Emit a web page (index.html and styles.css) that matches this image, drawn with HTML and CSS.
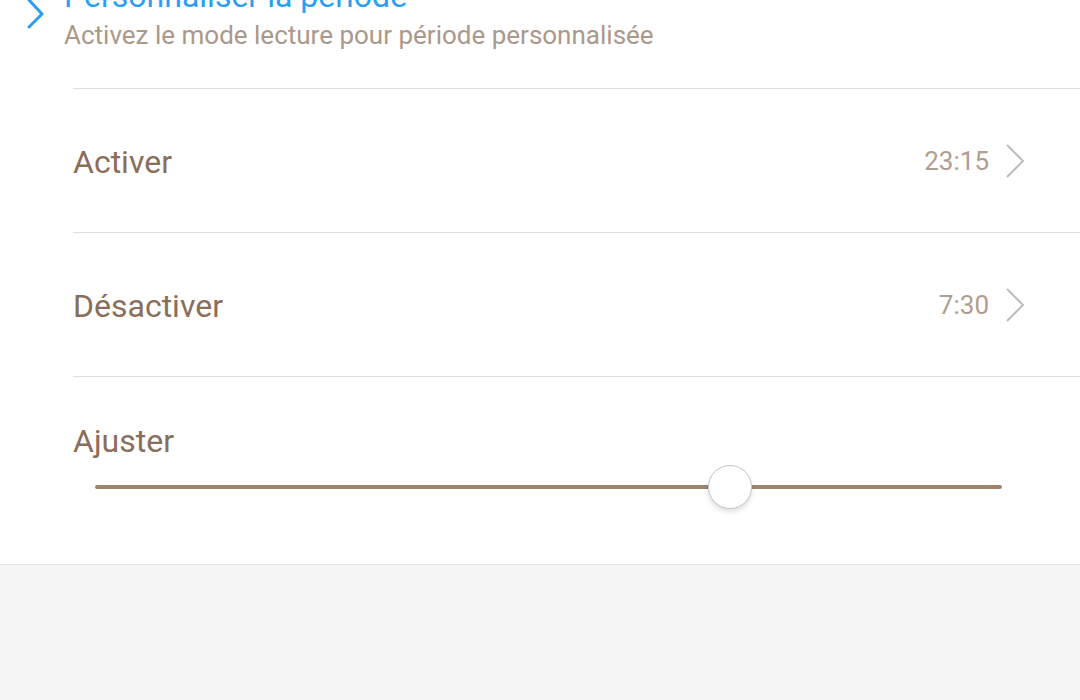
FILE: index.html
```html
<!DOCTYPE html>
<html lang="fr">
<head>
  <meta charset="UTF-8">
  <title>Mode lecture</title>
  <link rel="stylesheet" href="styles.css">
</head>
<body>

<div class="panel">
  <div class="intro">
    <svg class="intro-icon" width="20" height="40" viewBox="0 0 20 40">
      <polyline points="3,2 16,16 3,29" fill="none" stroke="#2a9ef2" stroke-width="3" stroke-linecap="round" stroke-linejoin="round"/>
    </svg>
    <div class="intro-text">
      <div class="intro-title">Personnaliser la période</div>
      <div class="intro-sub">Activez le mode lecture pour période personnalisée</div>
    </div>
  </div>

  <div class="row">
    <span class="row-label">Activer</span>
    <span class="row-value">23:15</span>
    <svg class="row-arrow" width="20" height="36" viewBox="0 0 20 36">
      <polyline points="2,2 18,18 2,34" fill="none" stroke="#bdbdbd" stroke-width="2"/>
    </svg>
  </div>

  <div class="row">
    <span class="row-label">Désactiver</span>
    <span class="row-value">7:30</span>
    <svg class="row-arrow" width="20" height="36" viewBox="0 0 20 36">
      <polyline points="2,2 18,18 2,34" fill="none" stroke="#bdbdbd" stroke-width="2"/>
    </svg>
  </div>

  <div class="adjust">
    <div class="row-label">Ajuster</div>
    <div class="slider">
      <div class="slider-track"></div>
      <div class="slider-thumb" style="left: 70%"></div>
    </div>
  </div>
</div>

</body>
</html>
```

FILE: styles.css
```css
body {
  font-family: Roboto, "Noto Sans", sans-serif;
  margin: 0;
  background-color: #f5f5f5;
}
.panel {
  background-color: #fff;
  border-bottom: 1px solid #e6e6e6;
  overflow: hidden;
}
/* header is scrolled partly out of view */
.intro {
  display: flex;
  margin-top: -23px;
  padding-left: 26px;
}
.intro-icon {
  margin-top: 21px;
  margin-right: 18px;
  flex-shrink: 0;
}
.intro-title {
  font-size: 32px;
  line-height: 38px;
  color: #2a9ef2;
}
.intro-sub {
  margin-top: 4px;
  font-size: 26px;
  line-height: 32px;
  color: #ab988b;
  padding-bottom: 37px;
}
.row {
  display: flex;
  align-items: center;
  height: 143px;
  margin-left: 73px;
  padding-right: 55px;
  border-top: 1px solid #dedede;
}
.row-label {
  font-size: 32px;
  line-height: 40px;
  color: #8a6d5a;
  padding-top: 2px;
}
.row-value {
  margin-left: auto;
  margin-right: 16px;
  font-size: 26px;
  color: #b09d90;
}
.row-arrow {
  display: block;
}
.adjust {
  margin-left: 73px;
  padding-top: 42px;
  padding-bottom: 55px;
  border-top: 1px solid #dedede;
}
.slider {
  position: relative;
  height: 44px;
  margin: 4px 78px 0 22px;
  display: flex;
  align-items: center;
}
.slider-track {
  flex: 1;
  height: 4px;
  border-radius: 2px;
  background-color: #a0846c;
}
.slider-thumb {
  position: absolute;
  top: 0;
  width: 42px;
  height: 42px;
  margin-left: -22px;
  border-radius: 50%;
  background-color: #fff;
  border: 1px solid #c6c6c6;
  box-shadow: 0 3px 5px rgba(0, 0, 0, 0.13);
}
```
